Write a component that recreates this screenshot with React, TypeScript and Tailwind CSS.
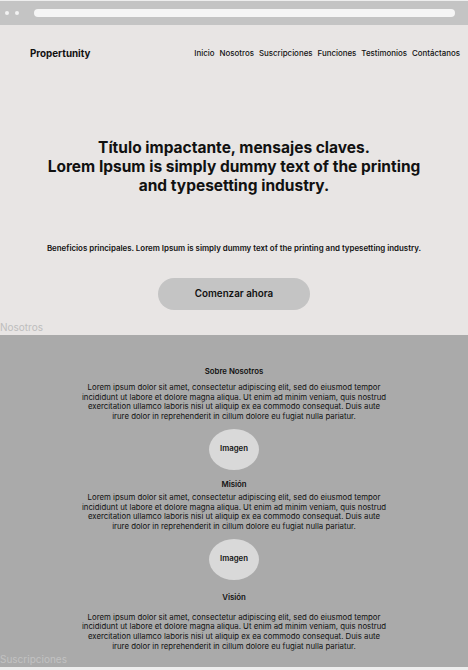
const para =
  'Lorem ipsum dolor sit amet, consectetur adipiscing elit, sed do eiusmod tempor incididunt ut labore et dolore magna aliqua. Ut enim ad minim veniam, quis nostrud exercitation ullamco laboris nisi ut aliquip ex ea commodo consequat. Duis aute irure dolor in reprehenderit in cillum dolore eu fugiat nulla pariatur.';

const links = ['Inicio', 'Nosotros', 'Suscripciones', 'Funciones', 'Testimonios', 'Contáctanos'];

function Paragraph() {
  return (
    <p className="mx-auto w-[308px] text-center text-[7.8px] leading-[9.7px] text-[#111]">{para}</p>
  );
}

function Imagen({ className = '' }: { className?: string }) {
  return (
    <div className={`mx-auto flex h-[41px] w-[50px] items-center justify-center rounded-[50%] bg-[#d9d9d9] text-[7.8px] font-semibold text-[#111] ${className}`}>
      Imagen
    </div>
  );
}

export default function App() {
  return (
    <div className="w-[468px] h-[670px] overflow-hidden bg-[#eeeeee] pt-px font-['Inter',sans-serif]">
      {/* browser bar */}
      <div className="flex h-[24px] items-center bg-[#c4c4c4] pl-[5px] pr-[13px]">
        <div className="flex gap-[6px]">
          <span className="h-[4px] w-[4px] rounded-full bg-[#f3f3f3]" />
          <span className="h-[4px] w-[4px] rounded-full bg-[#f3f3f3]" />
        </div>
        <div className="ml-[15px] h-[8px] flex-1 rounded-full bg-[#f5f5f5]" />
      </div>

      <div className="bg-[#e8e5e4]">
        {/* nav */}
        <nav className="flex h-[58px] items-center justify-between pl-[30px] pr-[8px]">
          <span className="text-[9.8px] font-bold text-[#111]">Propertunity</span>
          <ul className="flex gap-[5px] text-[7.9px] font-medium text-[#111]">
            {links.map(l => (
              <li key={l}>{l}</li>
            ))}
          </ul>
        </nav>

        {/* hero */}
        <h1 className="mt-[55px] text-center text-[15.5px] font-bold leading-[19px] text-[#111]">
          Título impactante, mensajes claves.
          <br />
          Lorem Ipsum is simply dummy text of the printing
          <br />
          and typesetting industry.
        </h1>
        <p className="mt-[48px] text-center text-[7.9px] font-semibold leading-[10px] text-[#111]">
          Beneficios principales. Lorem Ipsum is simply dummy text of the printing and typesetting industry.
        </p>
        <div className="mt-[25px] flex justify-center">
          <button className="h-[32px] w-[152px] rounded-full bg-[#c4c4c4] text-[9.8px] font-semibold text-[#111]">
            Comenzar ahora
          </button>
        </div>
        <div className="mt-[10px] h-[15px] text-[10px] leading-[14px] text-[#bdbdbd]">Nosotros</div>
      </div>

      {/* nosotros */}
      <section className="h-[332px] bg-[#aaaaaa] pt-[31px]">
        <h2 className="text-center text-[7.8px] font-semibold leading-[10px] text-[#111]">Sobre Nosotros</h2>
        <div className="mt-[7px]">
          <Paragraph />
        </div>
        <Imagen className="mt-[7px]" />
        <h2 className="mt-[9px] text-center text-[7.8px] font-semibold leading-[10px] text-[#111]">Misión</h2>
        <div className="mt-[4px]">
          <Paragraph />
        </div>
        <Imagen className="mt-[7px]" />
        <h2 className="mt-[12px] text-center text-[7.8px] font-semibold leading-[10px] text-[#111]">Visión</h2>
        <div className="mt-[11px]">
          <Paragraph />
        </div>
        <div className="mt-[1px] text-[10px] leading-[14px] text-[#c2c2c2]">Suscripciones</div>
      </section>
    </div>
  );
}
